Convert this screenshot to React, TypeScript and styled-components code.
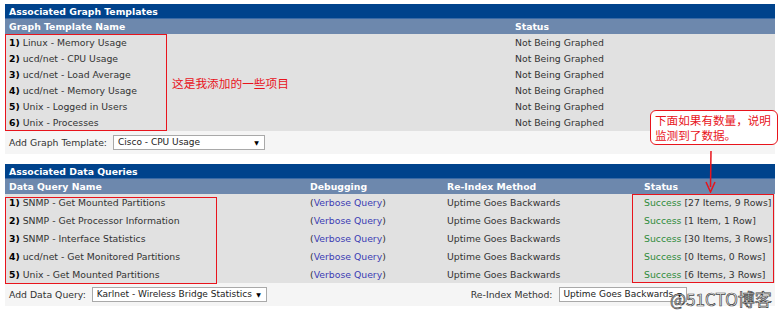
import React from 'react';
import styled, { createGlobalStyle } from 'styled-components';

const GlobalStyle = createGlobalStyle`
  body {
    margin: 0;
    background: #fff;
    font-family: "DejaVu Sans", Verdana, sans-serif;
    font-size: 9.3px;
    color: #333;
  }
`;

const graphRows = [
  'Linux - Memory Usage',
  'ucd/net - CPU Usage',
  'ucd/net - Load Average',
  'ucd/net - Memory Usage',
  'Unix - Logged in Users',
  'Unix - Processes',
];

const queryRows = [
  { name: 'SNMP - Get Mounted Partitions', result: '[27 Items, 9 Rows]' },
  { name: 'SNMP - Get Processor Information', result: '[1 Item, 1 Row]' },
  { name: 'SNMP - Interface Statistics', result: '[30 Items, 3 Rows]' },
  { name: 'ucd/net - Get Monitored Partitions', result: '[0 Items, 0 Rows]' },
  { name: 'Unix - Get Mounted Partitions', result: '[6 Items, 3 Rows]' },
];

const GRAPH_COLS = '506px 1fr';
const QUERY_COLS = '301px 137px 197px 1fr';

const App: React.FC = () => {
  return (
    <Page>
      <GlobalStyle />
      <Section>
        <TitleBar>Associated Graph Templates</TitleBar>
        <HeaderRow cols={GRAPH_COLS}>
          <span>Graph Template Name</span>
          <span>Status</span>
        </HeaderRow>
        {graphRows.map((name, i) => (
          <Row key={name} cols={GRAPH_COLS} h={16.17}>
            <span>
              <Num>{i + 1})</Num> {name}
            </span>
            <span>Not Being Graphed</span>
          </Row>
        ))}
        <AddRow>
          <Label>Add Graph Template:</Label>
          <Select w={152}>
            <span>Cisco - CPU Usage</span>
            <Caret>▼</Caret>
          </Select>
        </AddRow>
      </Section>

      <Section>
        <TitleBar>Associated Data Queries</TitleBar>
        <HeaderRow cols={QUERY_COLS}>
          <span>Data Query Name</span>
          <span>Debugging</span>
          <span>Re-Index Method</span>
          <span>Status</span>
        </HeaderRow>
        {queryRows.map((q, i) => (
          <Row key={q.name} cols={QUERY_COLS} h={17.8}>
            <span>
              <Num>{i + 1})</Num> {q.name}
            </span>
            <span>
              (<Link>Verbose Query</Link>)
            </span>
            <span>Uptime Goes Backwards</span>
            <span>
              <Ok>Success</Ok> {q.result}
            </span>
          </Row>
        ))}
        <AddRow>
          <Label>Add Data Query:</Label>
          <Select w={175}>
            <span>Karlnet - Wireless Bridge Statistics</span>
            <Caret>▼</Caret>
          </Select>
          <Spacer />
          <Label>Re-Index Method:</Label>
          <Select w={128}>
            <span>Uptime Goes Backwards</span>
            <Caret>▼</Caret>
          </Select>
        </AddRow>
      </Section>

      <RedBox style={{ left: 5, top: 34, width: 162, height: 97 }} />
      <Note style={{ left: 172, top: 75 }}>这是我添加的一些项目</Note>
      <RedBox style={{ left: 5, top: 197, width: 212, height: 87 }} />
      <RedBox style={{ left: 632, top: 194, width: 142, height: 89 }} />

      <Callout>
        <div>下面如果有数量，说明</div>
        <div>监测到了数据。</div>
      </Callout>
      <Arrow width="14" height="42" viewBox="0 0 14 42">
        <line x1="7" y1="0" x2="6.5" y2="36" stroke="#e8141c" strokeWidth="1.5" />
        <path d="M2 31 L6.5 41 L11 31" fill="none" stroke="#e8141c" strokeWidth="1.5" />
      </Arrow>

      <Watermark>@51CTO博客</Watermark>
    </Page>
  );
};

const Page = styled.div`
  position: relative;
  width: 779px;
  height: 311px;
  padding: 4px 4px 0 5px;
  box-sizing: border-box;
  display: flex;
  flex-direction: column;
  gap: 10px;
  overflow: hidden;
`;

const Section = styled.div`
  display: flex;
  flex-direction: column;
`;

const TitleBar = styled.div`
  height: 15px;
  background: #00438c;
  color: #fff;
  font-weight: bold;
  line-height: 15px;
  padding-left: 4px;
  border-bottom: 1px solid #3a6aa6;
  box-sizing: border-box;
`;

const HeaderRow = styled.div<{ cols: string }>`
  display: grid;
  grid-template-columns: ${(p) => p.cols};
  height: 15px;
  line-height: 15px;
  background: #6d88ad;
  color: #fff;
  font-weight: bold;
  & > span {
    padding-left: 4px;
  }
`;

const Row = styled.div<{ cols: string; h: number }>`
  display: grid;
  grid-template-columns: ${(p) => p.cols};
  height: ${(p) => p.h}px;
  align-items: center;
  background: #e1e1e1;
  color: #333;
  white-space: nowrap;
  & > span {
    padding-left: 4px;
  }
`;

const Num = styled.b`
  color: #000;
`;

const Link = styled.span`
  color: #3c3cb4;
`;

const Ok = styled.span`
  color: #2e8b3a;
`;

const AddRow = styled.div`
  display: flex;
  align-items: center;
  height: 23px;
  background: #f5f5f5;
  padding-left: 4px;
  gap: 6px;
`;

const Label = styled.span`
  color: #333;
`;

const Spacer = styled.div`
  flex: 1 0 0;
  max-width: 192px;
`;

const Select = styled.div<{ w: number }>`
  display: flex;
  align-items: center;
  justify-content: space-between;
  gap: 4px;
  width: ${(p) => p.w}px;
  height: 15px;
  box-sizing: border-box;
  border: 1px solid #a9a9a9;
  background: #fff;
  padding: 0 5px 0 4px;
  color: #222;
  font-size: 9px;
  white-space: nowrap;
  overflow: hidden;
`;

const Caret = styled.span`
  font-size: 6px;
  color: #000;
`;

const RedBox = styled.div`
  position: absolute;
  border: 1.5px solid #e8141c;
  box-sizing: border-box;
`;

const Note = styled.div`
  position: absolute;
  color: #e8141c;
  font-family: "Noto Sans CJK SC", sans-serif;
  font-size: 11.7px;
  line-height: 16px;
  white-space: nowrap;
`;

const Callout = styled.div`
  position: absolute;
  left: 650px;
  top: 110px;
  width: 128px;
  height: 35px;
  box-sizing: border-box;
  border: 1.5px solid #e8141c;
  border-radius: 6px;
  background: #fff;
  color: #e8141c;
  font-family: "Noto Sans CJK SC", sans-serif;
  font-size: 11.6px;
  line-height: 14.5px;
  padding: 2px 0 0 4px;
  white-space: nowrap;
`;

const Arrow = styled.svg`
  position: absolute;
  left: 704px;
  top: 151px;
`;

const Watermark = styled.div`
  position: absolute;
  left: 670px;
  top: 289px;
  font-family: "Noto Sans CJK SC", sans-serif;
  font-size: 17px;
  line-height: 20px;
  color: #fff;
  -webkit-text-stroke: 0.7px #444;
  white-space: nowrap;
`;

export default App;
